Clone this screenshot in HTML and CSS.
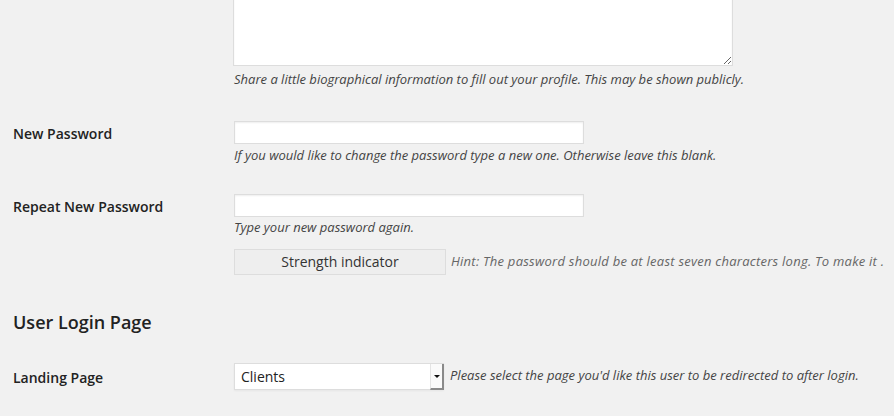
FILE: index.html
```html
<!DOCTYPE html>
<html lang="en">
<head>
<meta charset="utf-8">
<title>Profile</title>
<link rel="stylesheet" href="styles.css">
</head>
<body>
<div class="wrap">
  <div class="row row-bio">
    <div class="label"></div>
    <div class="field">
      <textarea class="bio" aria-label="Biographical Info"></textarea>
      <p class="desc desc-bio">Share a little biographical information to fill out your profile. This may be shown publicly.</p>
    </div>
  </div>

  <div class="row row-pass1">
    <label class="label" for="pass1">New Password</label>
    <div class="field">
      <input class="text" id="pass1" type="password">
      <p class="desc desc-pass1">If you would like to change the password type a new one. Otherwise leave this blank.</p>
    </div>
  </div>

  <div class="row row-pass2">
    <label class="label" for="pass2">Repeat New Password</label>
    <div class="field">
      <input class="text" id="pass2" type="password">
      <p class="desc">Type your new password again.</p>
      <div class="strength-line">
        <div class="strength">Strength indicator</div>
        <div class="hint-clip">
          <p class="hint">Hint: The password should be at least seven characters long. To make it .</p>
        </div>
      </div>
    </div>
  </div>

  <h3 class="section">User Login Page</h3>

  <div class="row row-landing">
    <div class="label">Landing Page</div>
    <div class="field field-inline">
      <div class="select" role="combobox" aria-expanded="false">
        <span class="select-value">Clients</span>
        <span class="select-arrow"><span class="tri"></span></span>
      </div>
      <p class="desc inline-desc">Please select the page you'd like this user to be redirected to after login.</p>
    </div>
  </div>
</div>
</body>
</html>
```

FILE: styles.css
```css
html, body {
  margin: 0;
  padding: 0;
  background: #f1f1f1;
  overflow: hidden;
}
body {
  font-family: "Open Sans", "Liberation Sans", sans-serif;
  color: #222;
  font-size: 14px;
  width: 894px;
  height: 416px;
}
.wrap {
  margin-top: -34px;
  padding-left: 13px;
}
.row {
  display: flex;
  align-items: flex-start;
}
.label {
  width: 221px;
  flex: 0 0 221px;
  font-weight: 600;
  font-size: 14px;
  line-height: 20px;
  color: #222;
  padding-top: 3px;
}
.field {
  flex: 1 1 auto;
  min-width: 0;
}
.bio {
  display: block;
  box-sizing: border-box;
  width: 500px;
  height: 100px;
  margin: 0 0 0 -1px;
  background: #fff;
  border: 1px solid #ddd;
  box-shadow: inset 0 1px 2px rgba(0,0,0,0.07);
  resize: vertical;
  font-family: inherit;
}
.desc {
  margin: 1px 0 0;
  font-style: italic;
  font-size: 13px;
  line-height: 19px;
  color: #444;
  white-space: nowrap;
}
.desc-bio {
  margin-top: 4px;
}
.desc-pass1 {
  margin-top: 2px;
}
.row-pass1 {
  margin-top: 32px;
}
.row-pass2 {
  margin-top: 29px;
}
.text {
  display: block;
  box-sizing: border-box;
  width: 350px;
  height: 23px;
  margin: 0;
  padding: 3px 5px;
  background: #fff;
  border: 1px solid #ddd;
  box-shadow: inset 0 1px 2px rgba(0,0,0,0.07);
  font-family: inherit;
  font-size: 14px;
}
.strength-line {
  display: flex;
  align-items: center;
  margin-top: 12px;
}
.strength {
  box-sizing: border-box;
  flex: 0 0 212px;
  width: 212px;
  height: 26px;
  line-height: 24px;
  text-align: center;
  background: #eee;
  border: 1px solid #ddd;
  color: #333;
  font-size: 14px;
}
.hint-clip {
  flex: 1 1 auto;
  min-width: 0;
  overflow: hidden;
}
.hint {
  margin: 0 0 2px 5px;
  font-style: italic;
  font-size: 13px;
  line-height: 19px;
  color: #666;
  letter-spacing: 0.25px;
  white-space: nowrap;
}
.section {
  margin: 35px 0 0;
  font-size: 18px;
  line-height: 24px;
  font-weight: 600;
  color: #222;
}
.row-landing {
  margin-top: 29px;
}
.row-landing .label {
  padding-top: 5px;
}
.field-inline {
  display: flex;
  align-items: center;
}
.select {
  box-sizing: border-box;
  display: flex;
  width: 210px;
  height: 27px;
  background: #fff;
  border: 1px solid #ddd;
  box-shadow: 0 1px 2px rgba(0,0,0,0.05);
}
.select-value {
  flex: 1 1 auto;
  padding-left: 6px;
  line-height: 25px;
  font-size: 14px;
  color: #222;
}
.select-arrow {
  box-sizing: border-box;
  flex: 0 0 14px;
  display: flex;
  align-items: center;
  justify-content: center;
  border-left: 1px solid #e4e4e4;
  border-right: 2px solid #8a8a8a;
  border-bottom: 2px solid #8a8a8a;
  margin-bottom: -1px;
  margin-right: -1px;
  background: #fafafa;
}
.tri {
  width: 0;
  height: 0;
  border-left: 3px solid transparent;
  border-right: 3px solid transparent;
  border-top: 3px solid #111;
}
.inline-desc {
  margin: 0 0 2px 6px;
}
```
